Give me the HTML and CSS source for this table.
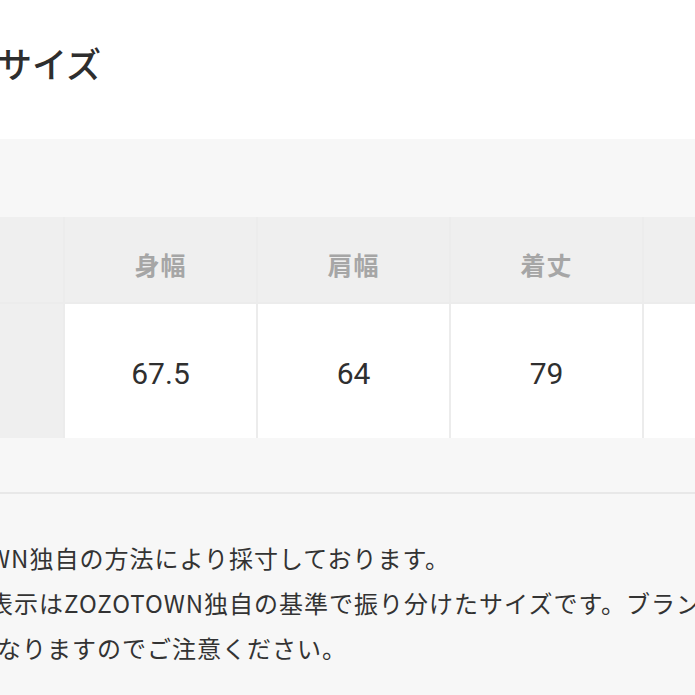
FILE: index.html
```html
<!DOCTYPE html>
<html lang="ja">
<head>
<meta charset="utf-8">
<title>サイズ</title>
<link rel="stylesheet" href="styles.css">
</head>
<body>
<div class="page">
  <header class="title-bar">
    <h2 class="title">サイズ</h2>
  </header>
  <section class="panel">
    <div class="size-table">
      <div class="cell corner"></div>
      <div class="cell th">身幅</div>
      <div class="cell th">肩幅</div>
      <div class="cell th">着丈</div>
      <div class="cell th"></div>
      <div class="cell rowhead"></div>
      <div class="cell td">67.5</div>
      <div class="cell td">64</div>
      <div class="cell td">79</div>
      <div class="cell td"></div>
    </div>
    <div class="notes">
      <p class="note note-1">WN独自の方法により採寸しております。</p>
      <p class="note note-2">表示はZOZOTOWN独自の基準で振り分けたサイズです。ブランド表記のサイズとは異</p>
      <p class="note note-3">なりますのでご注意ください。</p>
    </div>
  </section>
</div>
</body>
</html>
```

FILE: styles.css
```css
html, body {
  margin: 0;
  padding: 0;
  background: #f7f7f7;
}

body {
  width: 695px;
  height: 695px;
  overflow: hidden;
  font-family: "Noto Sans CJK JP", "Noto Sans", sans-serif;
  color: #333;
}

.page {
  display: flex;
  flex-direction: column;
}

.title-bar {
  background: #fff;
  height: 139px;
  box-sizing: border-box;
  padding-top: 43px;
}

.title {
  margin: 0 0 0 -3px;
  font-size: 35px;
  line-height: 40px;
  font-weight: 500;
  color: #2e2e2e;
  white-space: nowrap;
}

.panel {
  background: #f7f7f7;
  padding-top: 78px;
  display: flex;
  flex-direction: column;
}

.size-table {
  display: grid;
  grid-template-columns: 63px repeat(4, 191px);
  grid-template-rows: 85px 134px;
  column-gap: 2px;
  row-gap: 2px;
  background: #ececec;
  width: 835px;
}

.cell {
  display: flex;
  align-items: center;
  justify-content: center;
  box-sizing: border-box;
}

.corner,
.th,
.rowhead {
  background: #efefef;
}

.th {
  padding-top: 8px;
  font-size: 25px;
  font-weight: 700;
  color: #a6a6a6;
  letter-spacing: 1px;
}

.td {
  background: #fff;
  padding-top: 5px;
  font-family: Roboto, "Noto Sans", sans-serif;
  font-size: 30px;
  color: #2f2f2f;
}

.notes {
  margin-top: 54px;
  border-top: 2px solid #e8e8e8;
  padding-top: 41px;
}

.note {
  margin: 0;
  font-size: 24px;
  line-height: 45px;
  letter-spacing: 1px;
  color: #333;
  white-space: nowrap;
}

.note-1 {
  text-indent: -11px;
}

.note-2 {
  text-indent: -11px;
}

.note-3 {
  text-indent: -3px;
}
```
